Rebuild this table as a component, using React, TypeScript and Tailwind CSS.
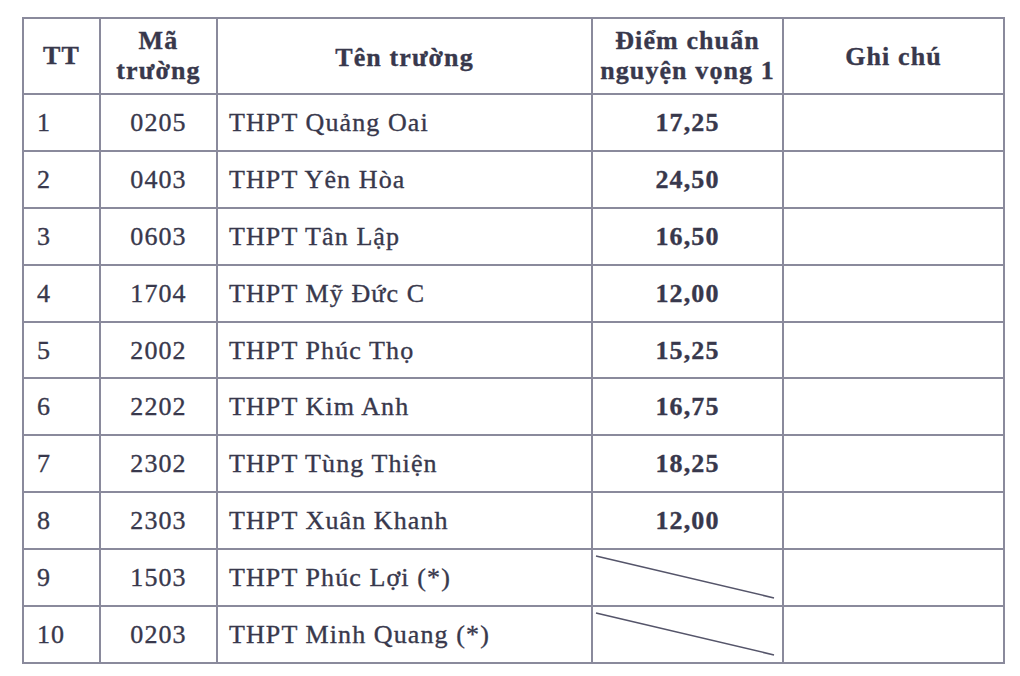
const rows = [
  { tt: "1", ma: "0205", ten: "THPT Quảng Oai", diem: "17,25" },
  { tt: "2", ma: "0403", ten: "THPT Yên Hòa", diem: "24,50" },
  { tt: "3", ma: "0603", ten: "THPT Tân Lập", diem: "16,50" },
  { tt: "4", ma: "1704", ten: "THPT Mỹ Đức C", diem: "12,00" },
  { tt: "5", ma: "2002", ten: "THPT Phúc Thọ", diem: "15,25" },
  { tt: "6", ma: "2202", ten: "THPT Kim Anh", diem: "16,75" },
  { tt: "7", ma: "2302", ten: "THPT Tùng Thiện", diem: "18,25" },
  { tt: "8", ma: "2303", ten: "THPT Xuân Khanh", diem: "12,00" },
  { tt: "9", ma: "1503", ten: "THPT Phúc Lợi (*)", diem: "" },
  { tt: "10", ma: "0203", ten: "THPT Minh Quang (*)", diem: "" },
];

const cell = "border-r-2 border-b-2 border-[#8a8a9c] flex items-center";
const head = `${cell} justify-center text-center font-bold leading-[30px]`;

function Slash() {
  return (
    <svg className="absolute inset-0 h-full w-full" viewBox="0 0 189 55" preserveAspectRatio="none">
      <line x1="3" y1="6" x2="181" y2="48" stroke="#55556a" strokeWidth="1.6" />
    </svg>
  );
}

export default function App() {
  return (
    <div className="min-h-[676px] w-[1020px] bg-white pl-[22px] pt-[17px] font-['Liberation_Serif',serif] text-[26px] tracking-[1.1px] text-[#38384c] [-webkit-text-stroke:0.35px_#38384c]">
      <div className="grid w-[983px] grid-cols-[77px_117px_375px_191px_221px] grid-rows-[76px_repeat(10,56.9px)] border-l-2 border-t-2 border-[#8a8a9c]">
        <div className={head}>TT</div>
        <div className={head}>
          Mã
          <br />
          trường
        </div>
        <div className={`${head} pt-[4px]`}>Tên trường</div>
        <div className={head}>
          Điểm chuẩn
          <br />
          nguyện vọng 1
        </div>
        <div className={`${head} pt-[2px]`}>Ghi chú</div>

        {rows.map((r) => (
          <div key={r.tt} className="contents">
            <div className={`${cell} pl-[13px]`}>{r.tt}</div>
            <div className={`${cell} justify-center`}>{r.ma}</div>
            <div className={`${cell} pl-[11px]`}>{r.ten}</div>
            <div className={`${cell} relative justify-center font-bold`}>
              {r.diem ? r.diem : <Slash />}
            </div>
            <div className={cell}></div>
          </div>
        ))}
      </div>
    </div>
  );
}
